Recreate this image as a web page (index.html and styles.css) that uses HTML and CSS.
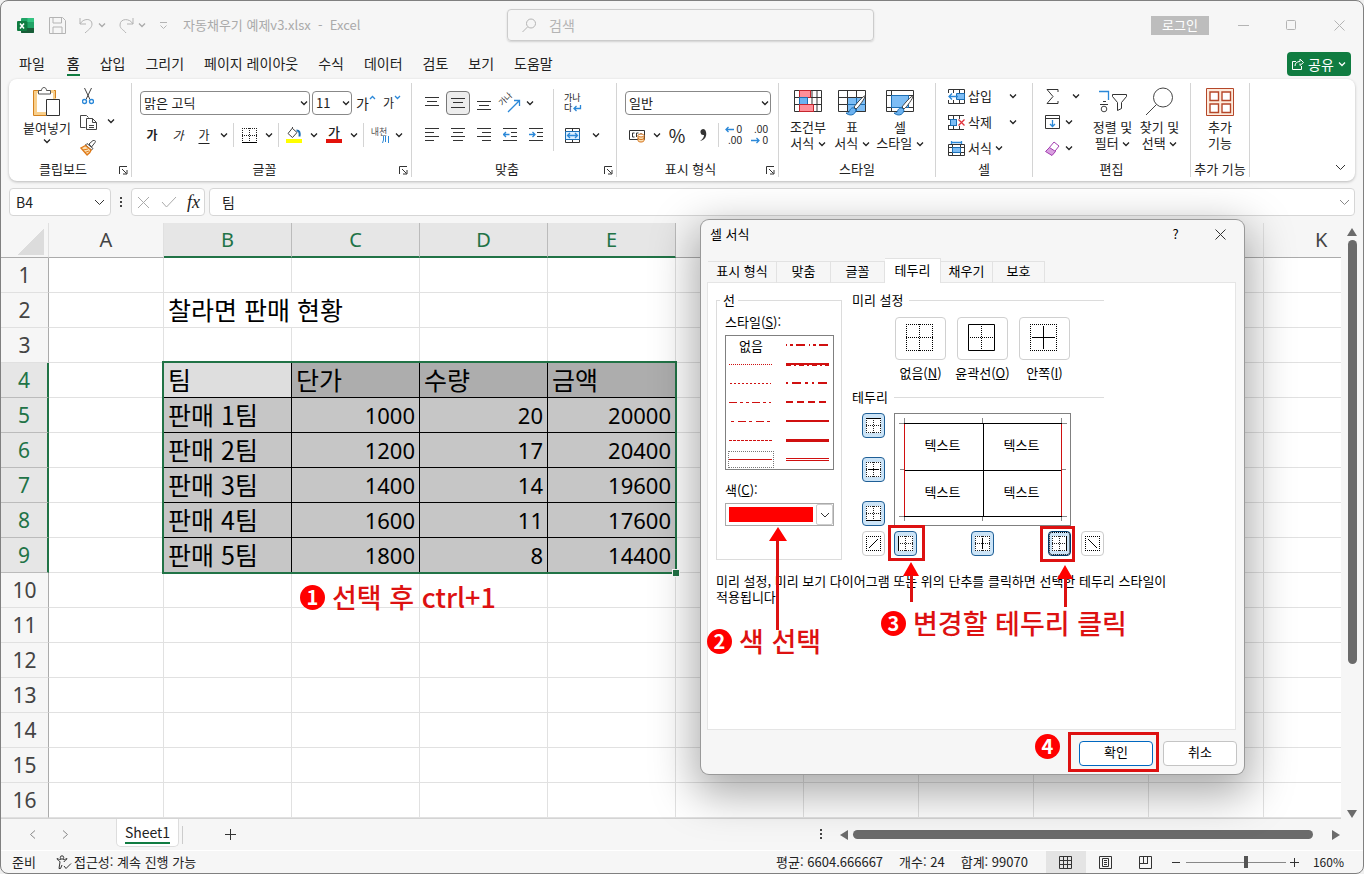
FILE: index.html
```html
<!DOCTYPE html>
<html lang="ko">
<head>
  <meta charset="UTF-8" />
  <meta name="viewport" content="width=device-width, initial-scale=1" />
  <title>자동채우기 예제v3.xlsx - Excel</title>
  <link rel="stylesheet" href="styles.css">
</head>
<body>
  <svg class="defs" aria-hidden="true">
    <symbol id="chev" viewBox="0 0 8 8"><path d="M1 2.500l3 3 3-3" fill="none" stroke="currentColor" stroke-width="1.300"/></symbol>
    <symbol id="launch" viewBox="0 0 9 9"><path d="M.5 8V.5H8M3 3l4.500 4.500M8 4v4H4" fill="none" stroke="#333"/></symbol>
    <symbol id="dots" viewBox="0 0 15 15"><path d="M0 .5h15M0 14.500h15M.5 0v15M14.500 0v15M7.500 0v15M0 7.500h15" fill="none" stroke="#222" stroke-dasharray="1 1"/></symbol>
    <symbol id="brush" viewBox="0 0 22 22"><path d="M20 1c1 1-7 12-9 13l-2-2C11 9 19 0 20 1z" fill="#fff" stroke="#444"/><path d="M9 13c-3-1-4 2-5 4-1 1-2 1-3 1 3 3 9 3 10-3z" fill="#6cb2f0" stroke="#1b6fb5"/></symbol>
  </svg>

  <div class="app">
    <header class="titlebar">
      <div class="quick">
        <svg class="logo" width="17" height="17" viewBox="0 0 17 17" aria-hidden="true">
          <rect x="4" y="1" width="13" height="15" rx="1" fill="#21a366"/>
          <path d="M10.500 1H16a1 1 0 0 1 1 1v3h-6.500z" fill="#33c481"/>
          <path d="M4 5h6.500v6H4z" fill="#107c41"/><path d="M4 11h13v4a1 1 0 0 1-1 1H5a1 1 0 0 1-1-1z" fill="#185c37"/>
          <rect y="4" width="10" height="10" rx="1" fill="#107c41"/>
          <path d="M3 6.500l4 5M7 6.500l-4 5" stroke="#fff" stroke-width="1.500"/>
        </svg>
        <button class="icon-btn" aria-label="저장"><svg width="17" height="17" viewBox="0 0 17 17"><path d="M.5.5h13l3 3v13H.5zM4 .5V6h8.500V.500M4 16.500V10h9v6.500" /></svg></button>
        <button class="icon-btn" aria-label="실행 취소"><svg width="15" height="17" viewBox="0 0 15 17"><path d="M1 1v6h6M1 7c3-6 12-6 12 0 0 4-4 6-7 9"/></svg><svg class="chev"><use href="#chev"/></svg></button>
        <button class="icon-btn" aria-label="다시 실행"><svg width="15" height="17" viewBox="0 0 15 17"><path d="M14 1v6H8M14 7C11 1 1 1 1 8c0 4 4 5 6 8"/></svg><svg class="chev"><use href="#chev"/></svg></button>
        <button class="icon-btn" aria-label="빠른 실행 도구 모음"><svg width="9" height="9" viewBox="0 0 9 9"><path d="M1 1.500h7M1.500 4.500l3 3 3-3"/></svg></button>
        <span class="doc">자동채우기 예제v3.xlsx &nbsp;-&nbsp; Excel</span>
      </div>
      <label class="search">
        <svg width="15" height="15" viewBox="0 0 15 15"><circle cx="9" cy="5.500" r="4.500"/><path d="M5.500 9L.5 14"/></svg>
        <input type="search" placeholder="검색" aria-label="검색" />
      </label>
      <button class="login">로그인</button>
      <div class="winctl">
        <button aria-label="최소화"><svg width="11" height="11" viewBox="0 0 11 11"><path d="M0 5.500h11"/></svg></button>
        <button aria-label="최대화"><svg width="11" height="11" viewBox="0 0 11 11"><rect x=".5" y=".5" width="9" height="9" rx="1"/></svg></button>
        <button aria-label="닫기"><svg width="11" height="11" viewBox="0 0 11 11"><path d="M.5.5l10 10M10.500.5l-10 10"/></svg></button>
      </div>
    </header>

    <nav class="tabs" aria-label="리본 탭">
      <a href="#">파일</a>
      <a href="#" class="on">홈</a>
      <a href="#">삽입</a>
      <a href="#">그리기</a>
      <a href="#">페이지 레이아웃</a>
      <a href="#">수식</a>
      <a href="#">데이터</a>
      <a href="#">검토</a>
      <a href="#">보기</a>
      <a href="#">도움말</a>
      <button class="share"><svg width="12" height="12" viewBox="0 0 12 12"><path d="M4 3.500H.5v8h9V8M3 8c0-3 2-4.500 5-4.500V1l3.500 3.500L8 7.500V5.500"/></svg>공유<svg class="chev"><use href="#chev"/></svg></button>
    </nav>

    <section class="ribbon" aria-label="홈">
      <div class="grp clipboard">
        <div class="body">
          <button class="big">
            <svg width="28" height="30" viewBox="0 0 28 30"><path d="M2.500 4.500h19v22h-19z" fill="#fff" stroke="#f8cf8c" stroke-width="3"/><path d="M6 3.500H.5v25H13M21 3.500h1.500V11" fill="none" stroke="#d4821e"/><path d="M5.500 7V3.500h3c0-4 5-4 5 0h4V7z" fill="#fff" stroke="#555"/><path d="M13.500 12.500h13v16h-13z" fill="#fff" stroke="#333"/></svg>
            <span>붙여넣기</span>
            <svg class="chev"><use href="#chev"/></svg>
          </button>
          <div class="stack">
            <button aria-label="잘라내기"><svg width="12" height="17" viewBox="0 0 12 17"><path d="M2.500 0l5.500 11.500M9.500 0L4 11.500" fill="none" stroke="#444"/><circle cx="2.500" cy="13.500" r="2" fill="none" stroke="#2b88d8" stroke-width="1.400"/><circle cx="9.500" cy="13.500" r="2" fill="none" stroke="#2b88d8" stroke-width="1.400"/></svg></button>
            <button aria-label="복사"><svg width="17" height="17" viewBox="0 0 17 17"><path d="M5.500 13.500h-5v-12h6l2 2M6.500 4.500h6l4 4v7h-10z" fill="#fff" stroke="#444"/><path d="M12.500 4.500v4h4M9 11.500h5M9 13.500h5" fill="none" stroke="#444"/></svg></button>
            <button aria-label="서식 복사"><svg width="17" height="16" viewBox="0 0 17 16"><path d="M9 4l4-3.500c2-1 3 1 2 2L11.500 7z" fill="#fff" stroke="#444"/><path d="M7 3.500l6 5-1.500 1.500-6-5z" fill="#fff" stroke="#444"/><path d="M5.500 5.500L1 8l6 7c2-1 3.500-3 4-5z" fill="#fbe0b5" stroke="#e07b1a" stroke-width="1.400"/><path d="M3 10l5-1M5 12.500l4-1.500" stroke="#e07b1a"/></svg></button>
          </div>
          <svg class="chev mid"><use href="#chev"/></svg>
        </div>
        <footer class="has-launch">클립보드<button aria-label="클립보드 설정"><svg width="9" height="9"><use href="#launch"/></svg></button></footer>
      </div>

      <div class="grp font">
        <div class="body rows">
          <div class="row">
            <span class="drop face"><select aria-label="글꼴"><option>맑은 고딕</option></select><svg class="chev"><use href="#chev"/></svg></span>
            <span class="drop size"><select aria-label="글꼴 크기"><option>11</option></select><svg class="chev"><use href="#chev"/></svg></span>
            <button class="t ga-lg">가<svg width="7" height="5" viewBox="0 0 7 5"><path d="M1 4l2.500-2.500L6 4"/></svg></button>
            <button class="t ga-sm">가<svg width="7" height="5" viewBox="0 0 7 5"><path d="M1 1l2.500 2.500L6 1"/></svg></button>
          </div>
          <div class="row">
            <button class="t bold">가</button>
            <button class="t ital">가</button>
            <button class="t und">가</button>
            <svg class="chev"><use href="#chev"/></svg>
            <i class="sep"></i>
            <button class="t" aria-label="테두리"><svg width="15" height="15"><use href="#dots"/><path d="M0 14.500h15" stroke="#000"/></svg></button>
            <svg class="chev"><use href="#chev"/></svg>
            <i class="sep"></i>
            <button class="t" aria-label="채우기 색"><svg width="16" height="16" viewBox="0 0 16 16"><path d="M6.500 1L2 6.500 6.500 10.500 11 5.500 6.500 1.500V0" fill="#fff" stroke="#444"/><path d="M10.500 3.500c3 0 3.500 2 3 6" fill="none" stroke="#1b6fb5" stroke-width="2"/><path d="M0 12h16v4H0z" fill="#ffff00" stroke="none"/></svg></button>
            <svg class="chev"><use href="#chev"/></svg>
            <button class="t color">가</button>
            <svg class="chev"><use href="#chev"/></svg>
            <i class="sep"></i>
            <button class="t ruby">내천<svg width="7" height="7" viewBox="0 0 7 7"><path d="M1.500 0v4L.5 7M3.500 0v6M6.500 0v7"/></svg></button>
            <svg class="chev"><use href="#chev"/></svg>
          </div>
        </div>
        <footer class="has-launch">글꼴<button aria-label="글꼴 설정"><svg width="9" height="9"><use href="#launch"/></svg></button></footer>
      </div>

      <div class="grp align">
        <div class="body">
          <div class="rows">
            <div class="row">
              <button class="t" aria-label="위쪽 맞춤"><svg width="14" height="16" viewBox="0 0 14 16"><path d="M0 2.500h14M2 6.500h10M0 10.500h14"/></svg></button>
              <button class="t on" aria-label="가운데 맞춤"><svg width="14" height="16" viewBox="0 0 14 16"><path d="M0 3.500h14M2 7.500h10M0 12.500h14"/></svg></button>
              <button class="t" aria-label="아래쪽 맞춤"><svg width="14" height="16" viewBox="0 0 14 16"><path d="M0 6.500h14M2 10.500h10M0 14.500h14"/></svg></button>
              <button class="t orient" aria-label="방향"><span>가나</span><svg width="14" height="14" viewBox="0 0 14 14"><path class="blue" d="M1 13L12 2M7 1.500h5.500V7"/></svg></button>
              <svg class="chev"><use href="#chev"/></svg>
            </div>
            <div class="row">
              <button class="t" aria-label="왼쪽 맞춤"><svg width="14" height="14" viewBox="0 0 14 14"><path d="M0 .5h14M0 4.500h9M0 8.500h14M0 12.500h9"/></svg></button>
              <button class="t" aria-label="가운데 맞춤"><svg width="14" height="14" viewBox="0 0 14 14"><path d="M0 .5h14M2 4.500h10M0 8.500h14M2 12.500h10"/></svg></button>
              <button class="t" aria-label="오른쪽 맞춤"><svg width="14" height="14" viewBox="0 0 14 14"><path d="M0 .5h14M5 4.500h9M0 8.500h14M5 12.500h9"/></svg></button>
              <button class="t" aria-label="내어쓰기"><svg width="14" height="14" viewBox="0 0 14 14"><path d="M0 .5h14M8 4.500h6M8 8.500h6M0 12.500h14"/><path class="blue" d="M6.500 6.500H.5M3 4L.5 6.500 3 9"/></svg></button>
              <button class="t" aria-label="들여쓰기"><svg width="14" height="14" viewBox="0 0 14 14"><path d="M0 .5h14M8 4.500h6M8 8.500h6M0 12.500h14"/><path class="blue" d="M0 6.500h6M3.500 4L6 6.500 3.500 9"/></svg></button>
            </div>
          </div>
          <i class="sep tall"></i>
          <div class="rows">
            <div class="row">
              <button class="t wrap"><span>가나</span><span>다</span><svg width="9" height="8" viewBox="0 0 9 8"><path class="blue" d="M7.500 0v3.500H1M3.500 1L1 3.500 3.500 6"/></svg></button>
            </div>
            <div class="row">
              <button class="t" aria-label="병합하고 가운데 맞춤"><svg width="15" height="15" viewBox="0 0 15 15"><path d="M.5.5h14v14H.5zM7.500 0v4M7.500 11v4"/><path d="M.5 3.500h14v8H.5z" fill="#dcefff" stroke="#1b6fb5"/><path class="blue" d="M2.500 7.500h10M5 5L2.500 7.500 5 10M10 5l2.500 2.500L10 10"/></svg></button>
              <svg class="chev wide"><use href="#chev"/></svg>
            </div>
          </div>
        </div>
        <footer class="has-launch">맞춤<button aria-label="맞춤 설정"><svg width="9" height="9"><use href="#launch"/></svg></button></footer>
      </div>

      <div class="grp number">
        <div class="body rows">
          <div class="row">
            <span class="drop fmt"><select aria-label="표시 형식"><option>일반</option></select><svg class="chev"><use href="#chev"/></svg></span>
          </div>
          <div class="row">
            <button class="t" aria-label="회계 표시 형식"><svg width="17" height="15" viewBox="0 0 17 15"><path d="M.5 2.500h15v9H.5z"/><path d="M5.500 5h-2v4h2M9.500 5H7.500v4M12 7V5"/><path d="M9 7.500v5c0 2 6 2 6 0v-5" fill="#fbe0b5" stroke="#d4741e"/><ellipse cx="12" cy="7.500" rx="3" ry="1.500" fill="#fff" stroke="#d4741e"/><path d="M9 10c0 2 6 2 6 0" stroke="#d4741e"/></svg></button>
            <svg class="chev"><use href="#chev"/></svg>
            <button class="t pct">%</button>
            <button class="t" aria-label="쉼표 스타일"><svg width="8" height="14" viewBox="0 0 8 14"><path d="M4 1a3 3 0 1 0 1 6c0 2-1 4-4 6C6 12 8 8 7 4 6.700 2 5.500 1 4 1z" fill="#333" stroke="none"/></svg></button>
            <i class="sep"></i>
            <button class="t dec"><span>0</span><span>.00</span><svg class="up" width="9" height="7" viewBox="0 0 9 7"><path class="blue" d="M9 3.500H1M3.500 1L1 3.500 3.500 6"/></svg></button>
            <button class="t dec"><span>.00</span><span>0</span><svg class="dn" width="9" height="7" viewBox="0 0 9 7"><path class="blue" d="M0 3.500h8M5.500 1L8 3.500 5.500 6"/></svg></button>
          </div>
        </div>
        <footer class="has-launch">표시 형식<button aria-label="표시 형식 설정"><svg width="9" height="9"><use href="#launch"/></svg></button></footer>
      </div>

      <div class="grp styles">
        <div class="body">
          <button class="big"><svg width="30" height="30" viewBox="0 0 30 30"><path d="M1.500 3.500h27v21h-27zM1 10.500h28M1 17.500h28M8 3v22M19 3v22M24 3v22" fill="#fff" stroke="#333"/><path d="M6.500 3.500h11v7h-11z" fill="#ff8f99" stroke="#c4262e"/><path d="M6.500 10.500h8v7h-8z" fill="#6cb2f0" stroke="#1b6fb5"/><path d="M6.500 17.500h14v7h-14z" fill="#ff8f99" stroke="#c4262e"/></svg><span>조건부<br>서식 <svg class="chev"><use href="#chev"/></svg></span></button>
          <button class="big"><svg width="30" height="30" viewBox="0 0 30 30"><path d="M1.500 3.500h27v21h-27zM1 10.500h28M1 17.500h28M10.500 3v22M19.500 3v22" fill="#fff" stroke="#333"/><path d="M10.500 10.500h18v14h-18z" fill="#7dbdf5"/><path d="M10.500 17.500h18M19.500 10.500v14" stroke="#1b6fb5"/><use href="#brush" x="8" y="8" width="22" height="22"/></svg><span>표<br>서식 <svg class="chev"><use href="#chev"/></svg></span></button>
          <button class="big wide"><svg width="30" height="30" viewBox="0 0 30 30"><path d="M1.500 3.500h27v21h-27zM1 8.500h28M1 20.500h28M6.500 3v22" fill="#fff" stroke="#333"/><path d="M6.500 8.500h17v12h-17z" fill="#7dbdf5" stroke="#1b6fb5"/><use href="#brush" x="8" y="8" width="22" height="22"/></svg><span>셀<br>스타일 <svg class="chev"><use href="#chev"/></svg></span></button>
        </div>
        <footer>스타일</footer>
      </div>

      <div class="grp cells">
        <div class="body stack">
          <button><svg width="17" height="15" viewBox="0 0 17 15"><path d="M.5.5h16v14H.5zM5.500 0v15M11.500 0v15M0 4.500h17M0 10.500h17"/><path d="M0 4h10v7H0z" fill="#fff" stroke="none"/><path d="M8.500 4.500h8v6h-8z" fill="#7dbdf5" stroke="#1b6fb5"/><path class="blue" d="M10 7.500H1M4 4.500l-3 3 3 3"/></svg>삽입<svg class="chev far"><use href="#chev"/></svg></button>
          <button><svg width="17" height="15" viewBox="0 0 17 15"><path d="M0 .5h16M0 14.500h16M.5 0v4M.5 11v4M5.500 0v4M5.500 11v4M11.500 0v4M11.500 11v4M0 4.500h9M0 10.500h9"/><path d="M2.500 4.500h6v6h-6z" fill="#7dbdf5" stroke="#1b6fb5"/><path d="M10.500 4.500l6 6M16.500 4.500l-6 6" stroke="#e0313a" stroke-width="1.300"/></svg>삭제<svg class="chev far"><use href="#chev"/></svg></button>
          <button><svg width="17" height="15" viewBox="0 0 17 15"><path d="M.5 3.500h16v11H.5zM4.500 3v12M12.500 3v12M0 6.500h17M0 11.500h17"/><path d="M4.500 6.500h8v5h-8z" fill="#7dbdf5" stroke="#1b6fb5"/><path class="blue" d="M3.500 0v3M13.500 0v3M3.500 1.500h10"/></svg>서식 <svg class="chev"><use href="#chev"/></svg></button>
        </div>
        <footer>셀</footer>
      </div>

      <div class="grp edit">
        <div class="body">
          <div class="stack">
            <button aria-label="자동 합계"><svg width="15" height="15" viewBox="0 0 15 15"><path d="M13 3V.5H2l6 7-6 7h11V12"/></svg><svg class="chev push"><use href="#chev"/></svg></button>
            <button aria-label="채우기"><svg width="15" height="14" viewBox="0 0 15 14"><path d="M.5.5h14v13H.5zM0 3.500h15"/><path class="blue" d="M7.500 5v6.500M5 9l2.500 2.500L10 9"/></svg><svg class="chev"><use href="#chev"/></svg></button>
            <button aria-label="지우기"><svg width="15" height="15" viewBox="0 0 15 15"><path d="M9 1l5 4-7 9-5.500-4z" stroke="#a33fb0"/><path d="M4.500 6.500l6 4L7 14.500.5 10.500z" fill="#d9a0e0" stroke="#a33fb0"/></svg><svg class="chev"><use href="#chev"/></svg></button>
          </div>
          <button class="big sort"><svg width="30" height="30" viewBox="0 0 30 30"><path class="blue" d="M1 4.500h9.500V13"/><path d="M14.500 7.500h14v2l-5 6v6l-4 2v-8l-5-6zM2 17.500h8M5 14.500h3"/><circle cx="6" cy="22" r="2.800" fill="none" stroke="#444"/></svg><span>정렬 및<br>필터 <svg class="chev"><use href="#chev"/></svg></span></button>
          <button class="big sort"><svg width="30" height="30" viewBox="0 0 30 30"><circle cx="18" cy="10.500" r="9.500" fill="none" stroke="#444"/><path d="M11.500 17.500L1 28" stroke="#444"/></svg><span>찾기 및<br>선택 <svg class="chev"><use href="#chev"/></svg></span></button>
        </div>
        <footer>편집</footer>
      </div>

      <div class="grp addin">
        <div class="body">
          <button class="big"><svg width="30" height="30" viewBox="0 0 30 30"><path d="M1.500 1.500h27v27h-27z" fill="#fdebdc" stroke="#b5472a"/><path d="M5 5h8.500v8.500H5zM17 5h8.500v8.500H17zM5 17h8.500v8.500H5zM17 17h8.500v8.500H17z" fill="#fff" stroke="#b5472a" stroke-width="1.400"/></svg><span>추가<br>기능</span></button>
        </div>
        <footer>추가 기능</footer>
      </div>
      <button class="collapse" aria-label="리본 축소"><svg width="11" height="7" viewBox="0 0 11 7"><path d="M1 1l4.500 4.500L10 1"/></svg></button>
    </section>

    <div class="fbar">
      <span class="namebox"><input type="text" value="B4" aria-label="이름 상자" /><svg width="11" height="7" viewBox="0 0 11 7"><path d="M1 1l4.500 4.500L10 1"/></svg></span>
      <i class="vdots"></i>
      <div class="fx">
        <button aria-label="취소"><svg width="13" height="13" viewBox="0 0 13 13"><path d="M1 1l11 11M12 1L1 12"/></svg></button>
        <button aria-label="입력"><svg width="16" height="12" viewBox="0 0 16 12"><path d="M1 6l4.500 5L15 1"/></svg></button>
        <button class="fn">fx</button>
      </div>
      <span class="formula"><input type="text" value="팀" aria-label="수식 입력줄" /><svg width="11" height="7" viewBox="0 0 11 7"><path d="M1 1l4.500 4.500L10 1"/></svg></span>
    </div>

    <main class="work">
      <div class="sheet">
        <table>
          <colgroup><col class="c-no"><col class="c-def"><col span="5" class="c-wide"><col span="5" class="c-def"></colgroup>
          <thead>
            <tr><th class="corner"></th><th>A</th><th class="sel">B</th><th class="sel">C</th><th class="sel">D</th><th class="sel">E</th><th></th><th></th><th></th><th></th><th></th><th class="last">K</th></tr>
          </thead>
          <tbody>
            <tr><th>1</th><td></td><td></td><td></td><td></td><td></td><td></td><td></td><td></td><td></td><td></td><td></td></tr>
            <tr><th>2</th><td></td><td colspan="2">찰라면 판매 현황</td><td></td><td></td><td></td><td></td><td></td><td></td><td></td><td></td></tr>
            <tr><th>3</th><td></td><td></td><td></td><td></td><td></td><td></td><td></td><td></td><td></td><td></td><td></td></tr>
            <tr class="pick head"><th>4</th><td></td><td class="v active">팀</td><td class="v">단가</td><td class="v">수량</td><td class="v">금액</td><td></td><td></td><td></td><td></td><td></td><td></td></tr>
            <tr class="pick"><th>5</th><td></td><td class="v">판매 1팀</td><td class="v n">1000</td><td class="v n">20</td><td class="v n">20000</td><td></td><td></td><td></td><td></td><td></td><td></td></tr>
            <tr class="pick"><th>6</th><td></td><td class="v">판매 2팀</td><td class="v n">1200</td><td class="v n">17</td><td class="v n">20400</td><td></td><td></td><td></td><td></td><td></td><td></td></tr>
            <tr class="pick"><th>7</th><td></td><td class="v">판매 3팀</td><td class="v n">1400</td><td class="v n">14</td><td class="v n">19600</td><td></td><td></td><td></td><td></td><td></td><td></td></tr>
            <tr class="pick"><th>8</th><td></td><td class="v">판매 4팀</td><td class="v n">1600</td><td class="v n">11</td><td class="v n">17600</td><td></td><td></td><td></td><td></td><td></td><td></td></tr>
            <tr class="pick"><th>9</th><td></td><td class="v">판매 5팀</td><td class="v n">1800</td><td class="v n">8</td><td class="v n">14400</td><td></td><td></td><td></td><td></td><td></td><td></td></tr>
            <tr><th>10</th><td></td><td></td><td></td><td></td><td></td><td></td><td></td><td></td><td></td><td></td><td></td></tr>
            <tr><th>11</th><td></td><td></td><td></td><td></td><td></td><td></td><td></td><td></td><td></td><td></td><td></td></tr>
            <tr><th>12</th><td></td><td></td><td></td><td></td><td></td><td></td><td></td><td></td><td></td><td></td><td></td></tr>
            <tr><th>13</th><td></td><td></td><td></td><td></td><td></td><td></td><td></td><td></td><td></td><td></td><td></td></tr>
            <tr><th>14</th><td></td><td></td><td></td><td></td><td></td><td></td><td></td><td></td><td></td><td></td><td></td></tr>
            <tr><th>15</th><td></td><td></td><td></td><td></td><td></td><td></td><td></td><td></td><td></td><td></td><td></td></tr>
            <tr><th>16</th><td></td><td></td><td></td><td></td><td></td><td></td><td></td><td></td><td></td><td></td><td></td></tr>
          </tbody>
        </table>
        <div class="selection"></div>
        <p class="note note1"><b>1</b>선택 후 ctrl+1</p>
      </div>
      <div class="vscroll">
        <svg width="10" height="8" viewBox="0 0 10 8"><path d="M5 0l5 8H0z"/></svg>
        <i></i>
        <svg width="10" height="8" viewBox="0 0 10 8"><path d="M5 8l5-8H0z"/></svg>
      </div>
    </main>

    <div class="sheetbar">
      <button class="nav" aria-label="이전 시트"><svg width="7" height="9" viewBox="0 0 7 9"><path d="M6 .5l-4.500 4L6 8.500"/></svg></button>
      <button class="nav" aria-label="다음 시트"><svg width="7" height="9" viewBox="0 0 7 9"><path d="M1 .5l4.500 4L1 8.500"/></svg></button>
      <button class="tab"><span>Sheet1</span></button>
      <i class="bar"></i>
      <button class="add" aria-label="새 시트"><svg width="11" height="11" viewBox="0 0 11 11"><path d="M0 5.500h11M5.500 0v11"/></svg></button>
      <i class="vdots"></i>
      <div class="hscroll">
        <svg width="8" height="10" viewBox="0 0 8 10"><path d="M0 5l8-5v10z"/></svg>
        <i></i>
        <svg width="8" height="10" viewBox="0 0 8 10"><path d="M8 5L0 0v10z"/></svg>
      </div>
    </div>

    <footer class="status">
      <span class="ready">준비</span>
      <svg width="16" height="15" viewBox="0 0 16 15"><path d="M1 3.500c2 1 3 1 4 1M11 3.500c-2 1-3 1-4 1M1 3.500c0 2 3 2 3 3.500L3 13.500h1.500L6 10M11 3.500c0 2-3 1.500-3 3.500M8 11l2 2.500 5-5"/><circle cx="6" cy="2.500" r="1.700"/></svg>
      <span class="acc">접근성: 계속 진행 가능</span>
      <span>평균: 6604.666667</span>
      <span>개수: 24</span>
      <span>합계: 99070</span>
      <div class="views">
        <button class="on" aria-label="기본"><svg width="13" height="13" viewBox="0 0 13 13"><path d="M.5.5h12v12H.5zM4.500 0v13M8.500 0v13M0 4.500h13M0 8.500h13"/></svg></button>
        <button aria-label="페이지 레이아웃"><svg width="13" height="13" viewBox="0 0 13 13"><path d="M.5.500h12v12H.5zM3.500 2.500h6v8h-6zM5 4.500h3M5 6.500h3M5 8.500h3"/></svg></button>
        <button aria-label="페이지 나누기"><svg width="13" height="13" viewBox="0 0 13 13"><path d="M.5.500h12v12H.5zM4.500 0v7.500M8.500 0v7.500M0 7.500h9"/></svg></button>
      </div>
      <button class="zoom" aria-label="축소"><svg width="9" height="9" viewBox="0 0 9 9"><path d="M0 4.500h8"/></svg></button>
      <input class="slider" type="range" min="0" max="100" value="60" aria-label="확대/축소" />
      <button class="zoom" aria-label="확대"><svg width="9" height="9" viewBox="0 0 9 9"><path d="M0 4.500h9M4.500 0v9"/></svg></button>
      <span class="level">160%</span>
    </footer>
  </div>

  <!-- Format Cells -->
  <div class="dialog" role="dialog" aria-label="셀 서식">
    <div class="dlg-title">
      <span>셀 서식</span>
      <button aria-label="도움말">?</button>
      <button aria-label="닫기"><svg width="11" height="11" viewBox="0 0 11 11"><path d="M.5.5l10 10M10.500.5l-10 10"/></svg></button>
    </div>
    <div class="dlg-tabs" role="tablist">
      <button role="tab" class="w1">표시 형식</button>
      <button role="tab">맞춤</button>
      <button role="tab">글꼴</button>
      <button role="tab" class="on" aria-selected="true">테두리</button>
      <button role="tab" class="w2t">채우기</button>
      <button role="tab" class="w2t">보호</button>
    </div>
    <div class="panel">
      <div class="cols">
        <fieldset>
          <legend>선</legend>
          <span class="lbl">스타일(<u>S</u>):</span>
          <div class="lines" role="listbox" aria-label="선 스타일">
            <span role="option">없음</span>
            <span role="option"><svg><path class="w2" stroke-dasharray="1 3 3 3 9 4" d="M0 3h43"/></svg></span>
            <span role="option"><svg><path stroke-dasharray="1 1" d="M0 3.500h43"/></svg></span>
            <span role="option"><svg><path class="w2" d="M0 3h43"/><path stroke-dasharray="5 3 2 3" d="M0 4.500h43"/></svg></span>
            <span role="option"><svg><path stroke-dasharray="2 2" d="M1 3.500h41"/></svg></span>
            <span role="option"><svg><path class="w2" stroke-dasharray="2 4 9 4 3 4" d="M0 3h43"/></svg></span>
            <span role="option"><svg><path stroke-dasharray="8 3 3 3 3 3" d="M0 3.500h42"/></svg></span>
            <span role="option"><svg><path class="w2" stroke-dasharray="7 4" d="M0 3h43"/></svg></span>
            <span role="option"><svg><path stroke-dasharray="3 4 8 3" d="M2 3.500h39"/></svg></span>
            <span role="option"><svg><path class="w2" d="M0 3h43"/></svg></span>
            <span role="option"><svg><path stroke-dasharray="3 1" d="M0 3.500h43"/></svg></span>
            <span role="option"><svg><path class="w3" d="M0 3.500h43"/></svg></span>
            <span role="option" class="cur" aria-selected="true"><svg><path d="M0 3.500h43"/></svg></span>
            <span role="option"><svg><path d="M0 2.500h43M0 4.500h43"/></svg></span>
          </div>
          <label class="lbl" for="color">색(<u>C</u>):</label>
          <div class="colorbox">
            <select id="color"><option value="#ff0000" label=" "></option></select>
            <span class="arrow"><svg width="10" height="6" viewBox="0 0 10 6"><path d="M1 1l4 4 4-4"/></svg></span>
          </div>
        </fieldset>

        <div class="right">
          <h3>미리 설정</h3>
          <div class="presets">
            <div><button id="p-none" aria-label="없음"><svg width="27" height="27" viewBox="0 0 27 27"><path class="dot" d="M0 .5h27M0 26.500h27M.5 0v27M26.500 0v27M13.500 0v27M0 13.500h27"/></svg></button><label for="p-none">없음(<u>N</u>)</label></div>
            <div><button id="p-out" aria-label="윤곽선"><svg width="27" height="27" viewBox="0 0 27 27"><path d="M.5.5h26v26H.5z"/><path class="dot" d="M13.500 0v27M0 13.500h27"/></svg></button><label for="p-out">윤곽선(<u>O</u>)</label></div>
            <div><button id="p-in" aria-label="안쪽"><svg width="27" height="27" viewBox="0 0 27 27"><path class="dot" d="M0 .5h27M0 26.500h27M.5 0v27M26.500 0v27"/><path d="M13.500 2v23M2 13.500h23"/></svg></button><label for="p-in">안쪽(<u>I</u>)</label></div>
          </div>
          <h3>테두리</h3>
          <div class="editor">
            <div class="side">
              <button class="on" aria-label="위쪽"><svg width="15" height="15"><use href="#dots"/><path d="M0 .5h15"/></svg></button>
              <button class="on" aria-label="안쪽 가로"><svg width="15" height="15"><use href="#dots"/><path d="M2 7.500h11"/></svg></button>
              <button class="on" aria-label="아래쪽"><svg width="15" height="15"><use href="#dots"/><path d="M0 14.500h15"/></svg></button>
            </div>
            <div class="preview">
              <svg width="175" height="111" viewBox="0 0 175 111" aria-hidden="true">
                <path class="tick" d="M9.500 4v10M4 9.500h10M87.500 4v6M166.500 4v10M162 9.500h10M5 55.500h5M166 55.500h5M9.500 98v9M4 102.500h10M87.500 102v5M166.500 98v9M162 102.500h10"/>
                <path class="bk" d="M9 9.500h158M9 56.500h158M9 102.500h158M88.500 9v94"/>
                <path class="rd" d="M9.500 10v92M166.500 10v92"/>
              </svg>
              <span>텍스트</span><span>텍스트</span><span>텍스트</span><span>텍스트</span>
            </div>
            <div></div>
            <div class="side"><button aria-label="대각선 위"><svg width="15" height="15" viewBox="0 0 15 15"><path class="dot" d="M0 .5h15M0 14.500h15M.5 0v15M14.500 0v15"/><path d="M3 12l9-9"/></svg></button></div>
            <div class="under">
              <button class="on" aria-label="왼쪽"><svg width="15" height="15"><use href="#dots"/><path d="M.5 0v15"/></svg></button>
              <button class="on" aria-label="안쪽 세로"><svg width="15" height="15"><use href="#dots"/><path d="M7.500 2v11"/></svg></button>
              <button class="on focus" aria-label="오른쪽"><svg width="15" height="15"><use href="#dots"/><path d="M14.500 0v15"/></svg></button>
            </div>
            <div class="side"><button aria-label="대각선 아래"><svg width="15" height="15" viewBox="0 0 15 15"><path class="dot" d="M0 .5h15M0 14.500h15M.5 0v15M14.500 0v15"/><path d="M3 3l9 9"/></svg></button></div>
          </div>
        </div>
      </div>
      <p class="help">미리 설정, 미리 보기 다이어그램 또는 위의 단추를 클릭하면 선택한 테두리 스타일이<br>적용됩니다.</p>
    </div>
    <div class="actions">
      <button class="ok">확인</button>
      <button>취소</button>
    </div>

    <svg class="marks" width="543" height="554" viewBox="0 0 543 554" aria-hidden="true">
      <path class="box" d="M188.500 306.500h34v33h-34zM340.500 307.500h32v33h-32zM368.500 513.500h88v37h-88z"/>
      <path class="tip" d="M77 307l9 14H68zM210 342l8 14h-16zM364 345l8 14h-16z"/>
      <path class="stem" d="M76.500 320v90M210.500 355v27M364.500 358v29"/>
    </svg>
    <p class="note note2"><b>2</b>색 선택</p>
    <p class="note note3"><b>3</b>변경할 테두리 클릭</p>
    <p class="note note4"><b>4</b></p>
  </div>
</body>
</html>
```
FILE: styles.css
```css
*, *::before, *::after {
  box-sizing: border-box;
}
body {
  margin: 0;
  font-family: 'Noto Sans CJK KR', 'Noto Sans', sans-serif;
  font-size: 13px;
  line-height: 16px;
  color: #222;
  background: #f0f0f0;
  position: relative;
}
button, input, select {
  font: inherit;
  color: inherit;
  margin: 0;
  padding: 0;
  border: none;
  background: none;
}
button {
  display: flex;
  align-items: center;
  justify-content: center;
  white-space: nowrap;
}
a {
  color: inherit;
  text-decoration: none;
}
svg {
  display: block;
  flex: none;
  fill: none;
  stroke: #333;
}
p, h3 {
  margin: 0;
}
.defs {
  position: absolute;
  width: 0;
  height: 0;
}
.chev {
  width: 8px;
  height: 8px;
}
.blue {
  stroke: #2b88d8;
  stroke-width: 1.3;
}

.app {
  min-height: 100vh;
  display: flex;
  flex-direction: column;
  background: #f6f6f6;
  border: 1px solid #808080;
  border-radius: 8px;
  overflow: hidden;
}

/* title bar */
.titlebar {
  height: 48px;
  display: flex;
  align-items: center;
  color: #aaa;
}
.titlebar svg {
  stroke: #b4b4b4;
}
.titlebar .logo {
  stroke: none;
}
.quick {
  flex: 0 0 506px;
  display: flex;
  align-items: center;
  gap: 13px;
  padding-left: 16px;
}
.icon-btn {
  gap: 4px;
}
.quick .logo {
  margin-right: 2px;
}
.doc {
  margin-left: 2px;
}
.search {
  flex: 0 1 367px;
  height: 32px;
  display: flex;
  align-items: center;
  gap: 12px;
  padding-left: 14px;
  border: 1px solid #ccc;
  border-radius: 4px;
  box-shadow: 0 1px 2px rgba(0, 0, 0, 0.15);
}
.search input {
  flex: 1;
  min-width: 0;
  font-size: 14px;
  outline: none;
}
.search input::placeholder {
  color: #b4b4b4;
}
.login {
  margin-left: auto;
  margin-right: 10px;
  width: 58px;
  height: 19px;
  background: #bdbdbd;
  color: #fff;
}
.winctl {
  display: flex;
}
.winctl button {
  width: 48px;
  height: 48px;
}

.tabs {
  height: 30px;
  display: flex;
  align-items: center;
  gap: 20px;
  padding: 0 12px 0 18px;
  font-size: 14px;
  white-space: nowrap;
}
.tabs a {
  height: 24px;
  line-height: 22px;
}
.tabs a:first-child {
  margin-right: 2px;
}
.tabs .on {
  border-bottom: 2px solid #107c41;
  font-weight: 500;
}
.share {
  margin-left: auto;
  width: 64px;
  height: 24px;
  gap: 4px;
  background: #107c41;
  color: #fff;
  border-radius: 4px;
}
.share svg {
  stroke: #fff;
}

/* ribbon */
.ribbon {
  min-height: 102px;
  margin: 0 8px;
  padding: 4px 0;
  display: flex;
  background: #fff;
  border-radius: 8px;
  box-shadow: 0 1px 3px rgba(0, 0, 0, 0.25);
}
.grp {
  flex: none;
  display: flex;
  flex-direction: column;
  border-right: 1px solid #d4d4d4;
}
.grp .body {
  flex: 1;
  display: flex;
}
.grp footer {
  height: 16px;
  position: relative;
  text-align: center;
  white-space: nowrap;
}
.grp .has-launch {
  padding-right: 14px;
}
.grp footer button {
  position: absolute;
  right: 3px;
  bottom: 2px;
}
.clipboard { width: 123px; }
.font { width: 280px; }
.align { width: 205px; }
.number { width: 162px; }
.styles { width: 157px; }
.cells { width: 97px; }
.edit { width: 158px; }
.addin { width: 59px; }

.big {
  flex-direction: column;
  justify-content: flex-start;
  width: 44px;
  padding-top: 4px;
}
.big > span {
  margin-top: 2px;
}
.big span .chev {
  display: inline-block;
}
.clipboard .body {
  padding-left: 12px;
}
.clipboard .big {
  width: 52px;
}
.clipboard .big > span {
  line-height: 18px;
}
.stack {
  display: flex;
  flex-direction: column;
}
.clipboard .stack {
  width: 30px;
}
.stack button {
  height: 26px;
}
.mid {
  margin: 34px 0 0 4px;
}
.grp .rows {
  display: flex;
  flex-direction: column;
  gap: 8px;
  padding: 8px 0 0 8px;
}
.row {
  height: 24px;
  display: flex;
  align-items: center;
  gap: 2px;
}
.row > .chev {
  margin: 0 2px;
}
.sep {
  width: 1px;
  height: 24px;
  margin: 0 1px;
  background: #d4d4d4;
}
.sep.tall {
  height: 62px;
  margin: 6px 0 0 5px;
}
.align .body > .rows:last-child {
  padding-left: 6px;
}
.row > .chev.wide {
  margin-left: 6px;
}
.t {
  position: relative;
  width: 24px;
  height: 24px;
}
.t.on {
  background: #ededed;
  border: 1px solid #777;
  border-radius: 4px;
}
.drop {
  position: relative;
  height: 24px;
}
.drop select {
  width: 100%;
  height: 24px;
  padding-left: 3px;
  border: 1px solid #888;
  border-radius: 4px;
  background: #fff;
  appearance: none;
}
.drop .chev {
  position: absolute;
  right: 2px;
  top: 8px;
}
.face { width: 170px; }
.size { width: 40px; }
.fmt { width: 146px; }
.ga-lg { font-size: 14px; }
.ga-sm { font-size: 12px; }
.ga-lg svg, .ga-sm svg {
  align-self: flex-start;
  margin-top: 4px;
  stroke: #2b88d8;
  stroke-width: 1.3;
}
.bold, .ital, .und {
  font-size: 12px;
}
.bold { font-weight: 700; }
.ital { font-style: italic; }
.und { text-decoration: underline; text-underline-offset: 3px; }
.color {
  font-weight: 500;
}
.color::after {
  content: '';
  position: absolute;
  left: 4px;
  right: 4px;
  bottom: 4px;
  height: 4px;
  background: #e3120b;
}
.color, .ruby {
  line-height: 12px;
  padding-bottom: 6px;
}
.ruby {
  font-size: 9px;
  color: #555;
}
.ruby svg {
  position: absolute;
  right: 2px;
  bottom: 4px;
  stroke: #2b88d8;
}
.orient span {
  position: absolute;
  left: 0;
  top: 3px;
  font-size: 8px;
  line-height: 10px;
  transform: rotate(-45deg);
}
.orient svg {
  margin: 6px 0 0 8px;
}
.wrap {
  flex-direction: column;
  align-items: flex-start;
  font-size: 9px;
  line-height: 10px;
  padding-left: 4px;
}
.wrap svg {
  position: absolute;
  right: 2px;
  bottom: 2px;
}
.pct {
  font-size: 18px;
}
.dec {
  flex-direction: column;
  align-items: flex-end;
  font-family: 'Liberation Sans', sans-serif;
  font-size: 10px;
  line-height: 11px;
  padding-right: 4px;
}
.dec svg {
  position: absolute;
  left: 3px;
}
.dec .up { top: 3px; }
.dec .dn { bottom: 3px; }

.styles .body {
  padding-left: 7px;
}
.styles .wide {
  margin-left: 2px;
  width: 48px;
}
.cells .stack {
  padding-left: 12px;
}
.cells button {
  justify-content: flex-start;
  gap: 3px;
}
.cells .far {
  margin-left: 14px;
}
.edit .body {
  padding-left: 12px;
}
.edit .stack {
  width: 44px;
}
.edit .stack button {
  justify-content: flex-start;
  gap: 5px;
}
.edit .push {
  margin-left: 7px;
}
.sort {
  width: 47px;
}
.addin .big {
  width: 100%;
}
.collapse {
  margin: auto 9px 6px auto;
}

/* formula bar */
.fbar {
  height: 28px;
  margin: 7px 8px;
  display: flex;
}
.namebox, .fx, .formula {
  display: flex;
  align-items: center;
  background: #fff;
  border: 1px solid #d6d6d6;
  border-radius: 4px;
}
.namebox {
  width: 102px;
  padding: 0 5px 0 6px;
}
.fbar input {
  flex: 1;
  min-width: 0;
  font-size: 14px;
  outline: none;
}
.vdots {
  width: 2px;
  height: 11px;
  align-self: center;
  margin: 0 9px;
  background: repeating-linear-gradient(#444 0 2px, transparent 2px 4px);
}
.fx {
  width: 74px;
  padding: 0 4px 0 5px;
  justify-content: space-between;
}
.fx svg {
  stroke: #aaa;
}
.fn {
  font: italic 18px 'Liberation Serif', serif;
}
.formula {
  flex: 1;
  margin-left: 4px;
  padding: 0 4px 0 12px;
}
.formula svg {
  stroke: #888;
}

/* grid */
.work {
  flex: 1;
  display: flex;
}
.sheet {
  flex: 1;
  min-width: 0;
  position: relative;
  overflow: hidden;
  background: #fff;
  border-bottom: 1px solid #d4d4d4;
}
table {
  table-layout: fixed;
  width: 1378px;
  border-spacing: 0;
}
.c-no { width: 48px; }
.c-def { width: 115px; }
.c-wide { width: 128px; }
th, td {
  height: 35px;
  padding: 0;
  overflow: hidden;
  white-space: nowrap;
}
th {
  font: 22px 'Noto Sans', sans-serif;
  line-height: 30px;
  color: #444;
  background: #f6f6f6;
}
thead th {
  border-right: 1px solid #e0e0e0;
  border-bottom: 1px solid #ababab;
  font-size: 20px;
}
thead .sel {
  background: #e6e6e6;
  color: #217346;
  border-right-color: #bbb;
  border-bottom: 2px solid #217346;
}
.last {
  text-align: left;
  padding-left: 51px;
}
.corner {
  background: linear-gradient(135deg, transparent 50%, #dcdcdc 50%) 17px 6px / 26px 26px no-repeat #f6f6f6;
}
tbody th {
  border-right: 1px solid #ababab;
  border-bottom: 1px solid #e0e0e0;
  font-size: 21px;
}
.pick th {
  background: #e6e6e6;
  color: #217346;
  border-right: 2px solid #217346;
  border-bottom-color: #bbb;
}
td {
  border-right: 1px solid #e1e1e1;
  border-bottom: 1px solid #e1e1e1;
  padding: 0 4px 2px;
  font-size: 25px;
  line-height: 30px;
  color: #000;
}
.v {
  background: #c6c6c6;
  border-color: #000;
}
.head .v {
  background: #adadad;
}
.head .active {
  background: #dedede;
}
.n {
  text-align: right;
  padding: 0 4px;
  font: 22px 'Noto Sans', sans-serif;
  line-height: 30px;
}
.selection {
  position: absolute;
  left: 161px;
  top: 138px;
  width: 515px;
  height: 213px;
  border: 2px solid #217346;
}
.selection::after {
  content: '';
  position: absolute;
  right: -4px;
  bottom: -4px;
  width: 6px;
  height: 6px;
  background: #217346;
  outline: 1px solid #fff;
}
.vscroll {
  width: 22px;
  display: flex;
  flex-direction: column;
  align-items: center;
  padding: 5px 0 1px;
}
.vscroll svg, .hscroll svg {
  fill: #6b6b6b;
  stroke: none;
}
.vscroll i {
  height: 424px;
  width: 9px;
  margin: 4px 0 auto;
  border-radius: 5px;
  background: #6b6b6b;
}

/* sheet tabs */
.sheetbar {
  height: 32px;
  display: flex;
  align-items: center;
  border-bottom: 1px solid #fff;
}
.nav {
  width: 33px;
}
.nav:first-child {
  margin-left: 15px;
}
.nav svg {
  stroke: #888;
}
.tab {
  align-self: flex-start;
  width: 63px;
  height: 28px;
  margin-left: 34px;
  background: #fff;
  border: 1px solid #ddd;
  border-top: none;
  border-radius: 0 0 5px 5px;
  font-size: 14px;
}
.tab span {
  line-height: 20px;
  border-bottom: 2px solid #107c41;
}
.bar {
  width: 1px;
  height: 18px;
  margin-left: 3px;
  background: #ccc;
}
.add {
  margin-left: 42px;
}
.sheetbar .vdots {
  margin: 0 18px 0 auto;
}
.hscroll {
  flex: 0 1 500px;
  display: flex;
  align-items: center;
  gap: 5px;
  margin-right: 23px;
}
.hscroll i {
  flex: 1;
  height: 9px;
  margin-right: 14px;
  border-radius: 5px;
  background: #6b6b6b;
}

.status {
  height: 22px;
  display: flex;
  align-items: center;
  gap: 16px;
  padding: 0 19px 0 11px;
  white-space: nowrap;
}
.status .acc {
  margin: 0 auto 0 -14px;
}
.ready {
  margin-right: 4px;
}
.level {
  font-size: 12px;
}
.views {
  display: flex;
  margin-left: 2px;
}
.views button {
  width: 40px;
  height: 22px;
}
.views .on {
  background: #e4e4e4;
}
.zoom {
  margin: 0 -11px 0 -10px;
}
.slider {
  appearance: none;
  width: 100px;
  height: 16px;
  background: linear-gradient(#888, #888) center / 100% 1px no-repeat;
}
.slider::-webkit-slider-thumb {
  appearance: none;
  width: 4px;
  height: 12px;
  background: #555;
}
.slider + .zoom {
  margin: 0 -2px 0 -12px;
}

/* Format Cells dialog, floats over the window */
.dialog {
  position: absolute;
  left: 701px;
  top: 220px;
  width: 543px;
  background: #f6f6f6;
  border-radius: 8px;
  color: #000;
  box-shadow: 0 0 0 1px #999, 0 14px 44px 6px rgba(0, 0, 0, 0.34);
}
.dlg-title {
  height: 38px;
  display: flex;
  align-items: flex-start;
  padding: 0 1px 0 9px;
}
.dlg-title span {
  margin: 6px auto 0 0;
}
.dlg-title button {
  width: 45px;
  height: 28px;
}
.dlg-tabs {
  height: 25px;
  display: flex;
  align-items: flex-end;
  padding-left: 7px;
}
.dlg-tabs button {
  width: 54px;
  height: 22px;
  padding-bottom: 3px;
  border: 1px solid #e2e2e2;
  border-left: none;
  border-bottom: none;
}
.dlg-tabs .w1 {
  width: 69px;
}
.dlg-tabs .w2t {
  width: 52px;
}
.dlg-tabs .on {
  position: relative;
  width: 56px;
  height: 25px;
  background: #fff;
}
.panel {
  height: 448px;
  margin: -1px 8px 0 6px;
  padding: 9px 8px;
  background: #fff;
  border: 1px solid #e5e5e5;
}
.cols {
  display: flex;
  gap: 10px;
}
fieldset {
  width: 126px;
  height: 268px;
  margin: 0;
  padding: 6px 7px 0 8px;
  border: 1px solid #dcdcdc;
  min-width: 0;
}
legend {
  padding: 0 3px;
  margin-left: -5px;
}
.lbl {
  display: block;
  height: 21px;
}
.lines {
  height: 135px;
  margin-bottom: 12px;
  padding: 0 3px;
  display: grid;
  grid-template-columns: 44px 44px;
  grid-auto-rows: 19px;
  justify-content: space-between;
  align-items: center;
  border: 1px solid #808080;
}
.lines span {
  text-align: center;
}
.lines svg {
  width: 43px;
  height: 7px;
  stroke: #d01010;
}
.w2 { stroke-width: 2; }
.w3 { stroke-width: 3; }
.lines .cur {
  height: 15px;
  padding-top: 4px;
  outline: 1px dotted #777;
}
.colorbox {
  display: flex;
  height: 23px;
  border: 1px solid #aaa;
  padding-left: 3px;
}
.colorbox select {
  flex: 1;
  min-width: 0;
  height: 15px;
  margin: 3px 3px 0 0;
  background: #f00;
  appearance: none;
}
.arrow {
  width: 17px;
  display: flex;
  align-items: center;
  justify-content: center;
  border: 1px solid #ccc;
  border-radius: 2px;
}
.right {
  width: 252px;
}
h3 {
  display: flex;
  align-items: center;
  gap: 6px;
  font-size: 13px;
  font-weight: 400;
}
h3::after {
  content: '';
  flex: 1;
  height: 1px;
  background: #dcdcdc;
}
.presets {
  display: flex;
  gap: 11px;
  margin: 9px 0 8px 43px;
}
.presets div {
  width: 51px;
  display: flex;
  flex-direction: column;
  align-items: center;
  gap: 5px;
  white-space: nowrap;
}
.presets button {
  width: 51px;
  height: 43px;
  padding: 0 2px 2px 0;
  border: 1px solid #d0d0d0;
  border-radius: 4px;
}
.presets svg, .editor button svg {
  stroke: #000;
}
.dot {
  stroke-dasharray: 1 1;
}
.editor {
  display: grid;
  grid-template-columns: 22px 177px 22px;
  gap: 5px 10px;
  margin: 8px 0 0 10px;
}
.side, .under {
  display: flex;
  flex-direction: column;
  justify-content: space-between;
}
.under {
  flex-direction: row;
}
.editor button {
  width: 23px;
  height: 25px;
  border: 1px solid #ccc;
  border-radius: 4px;
}
.editor .on {
  background: #cce4f7;
  border-color: #1f5f96;
}
.editor .on svg {
  background: #fff;
}
.editor .focus {
  outline: 1px dotted #000;
  outline-offset: -2px;
  border-color: #003a6b;
}
.preview {
  position: relative;
  height: 113px;
  padding: 7px 9px 9px 8px;
  display: grid;
  grid-template-columns: 1fr 1fr;
  place-items: center;
  border: 1px solid #808080;
}
.preview svg {
  position: absolute;
  left: 0;
  top: 0;
}
.tick { stroke: #888; }
.rd { stroke: #d01010; }
.bk { stroke: #000; }
.help {
  margin-top: 13px;
  white-space: nowrap;
}
.actions {
  height: 44px;
  display: flex;
  justify-content: flex-end;
  gap: 10px;
  padding: 11px 7px 0;
}
.actions button {
  width: 74px;
  height: 25px;
  padding-bottom: 3px;
  background: #fff;
  border: 1px solid #c4c4c4;
  border-radius: 4px;
}
.actions .ok {
  border-color: #0067c0;
}

/* red guide notes */
.note {
  position: absolute;
  display: flex;
  align-items: center;
  gap: 7px;
  font-size: 27px;
  line-height: 32px;
  font-weight: 500;
  color: #dd1111;
  white-space: nowrap;
}
.note b {
  width: 25px;
  height: 25px;
  border-radius: 50%;
  background: #f00;
  color: #fff;
  font-size: 20px;
  line-height: 24px;
  text-align: center;
}
.note1 { left: 299px; top: 358px; }
.note2 { left: 6px; top: 405px; }
.note3 { left: 180px; top: 387px; }
.note4 { left: 334px; top: 514px; }
.marks {
  position: absolute;
  left: 0;
  top: 0;
  pointer-events: none;
}
.box, .stem {
  stroke: #dd1111;
  stroke-width: 3;
}
.tip {
  fill: #f00;
  stroke: none;
}
```
